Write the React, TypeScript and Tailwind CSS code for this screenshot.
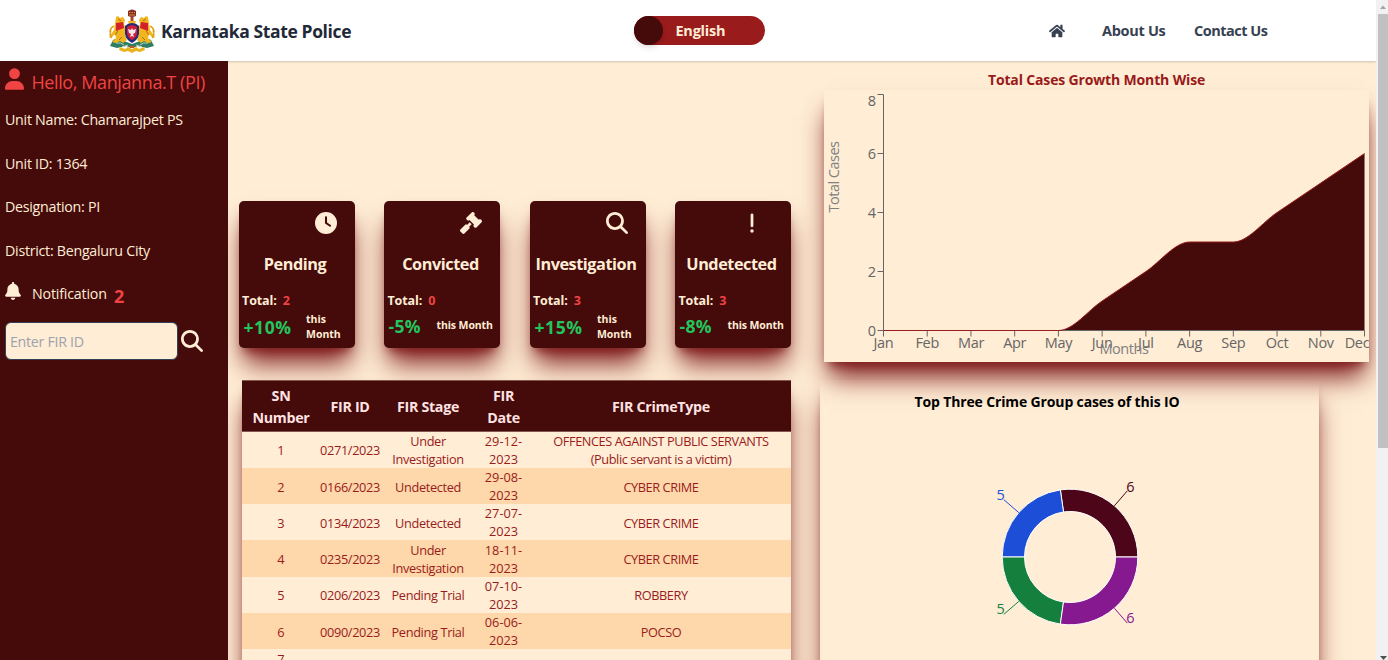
import React from "react";
import { FaHome } from "react-icons/fa";
import { FaUser, FaBell, FaMagnifyingGlass, FaClock, FaGavel, FaExclamation } from "react-icons/fa6";

const GLOW = "shadow-[0_20px_25px_-5px_#7f1d1d,0_8px_10px_-6px_#7f1d1d]";

function Emblem() {
  return (
    <svg viewBox="0 0 48 44" className="h-[44px] w-[48px]">
      <path d="M5 31q5-3 11 1l8 3 8-3q6-4 11-1l3 6-7 2-9-2-6 2-6-2-9 2-7-2z" fill="#2f7d63" />
      <path d="M8 34q5-1 8 2M40 34q-5-1-8 2M14 38l6-2M34 38l-6-2" stroke="#b9d6c2" strokeWidth="1" fill="none" />
      <g id="lion">
        <path d="M8 8l2-1 2 2 3-1 2 3-1 4 2 5-1 6 2 5-4 3-3-2-4 2-4-1 4-4-1-4-4 4-2-1 5-7 1-6z" fill="#f2b51d" />
        <path d="M3 21q-2 5 1 8M6 17q-4 2-4 6" stroke="#e0a11b" strokeWidth="1.5" fill="none" />
        <path d="M8 14l7-1 1 6-8 3z" fill="#d3202b" />
        <path d="M7 26l3-4M11 31l3-3M10 10l3 2" stroke="#8d5b12" strokeWidth=".8" />
      </g>
      <use href="#lion" transform="translate(48 0) scale(-1 1)" />
      <path d="M20 2q4-3 8 0v5q-4 2-8 0z" fill="#8b2c22" />
      <path d="M21 3.500h1.500M23.500 3.500H25M26 3.500h1M21 6h6" stroke="#d3903f" strokeWidth="1" />
      <path d="M22.500 8h3v5h-3z" fill="#a4492a" />
      <path d="M20 12h8l-1 3h-6z" fill="#f2b51d" />
      <path d="M17 17q3-3 7-3t7 3v8q-1 6-7 9-6-3-7-9z" fill="#202a78" />
      <path d="M19 18q5-4 10 0v7q-1 4-5 6-4-2-5-6z" fill="#cc1f3a" />
      <path d="M20 20l3 1 1-2 1 2 3-1-1 4-2 1 1 3-2-1-2 1 1-3-2-1z" fill="#f4e9ef" />
      <path d="M12 38l5 2 3-2 4 2 4-2 3 2 5-2 1 3-5 2-4-1-4 2-4-2-4 1-5-2z" fill="#eab320" />
      <path d="M21 37h6l-1 2h-4z" fill="#b9552b" />
    </svg>
  );
}

function Header() {
  return (
    <header className="relative z-10 flex h-[61px] shrink-0 items-center bg-white shadow-[0_1px_2px_rgba(0,0,0,0.18)]">
      <div className="flex w-[526px] items-center pl-[108px]">
        <Emblem />
        <span className="ml-[5px] mt-[2px] whitespace-nowrap text-[17.5px] font-bold tracking-[-0.38px] text-[#1f2937]">Karnataka State Police</span>
      </div>
      <div className="ml-[108px] flex h-[29px] w-[131px] items-center rounded-full bg-[#991b1b]">
        <div className="h-[29px] w-[29px] rounded-full bg-[#450a0a] shadow-md" />
        <span className="ml-[12.5px] mt-px text-[14.5px] font-bold tracking-[-0.25px] text-[#ffedd5]">English</span>
      </div>
      <nav className="ml-[284px] flex items-center text-[15px] font-bold text-[#374151]">
        <FaHome className="h-[16px] w-[16px]" />
        <a className="ml-[37px] w-[92px] whitespace-nowrap pt-px text-[14.5px] tracking-[-0.3px]">About Us</a>
        <a className="whitespace-nowrap pt-px text-[14.5px] tracking-[-0.5px]">Contact Us</a>
      </nav>
    </header>
  );
}

function Sidebar() {
  const facts = ["Unit Name: Chamarajpet PS", "Unit ID: 1364", "Designation: PI", "District: Bengaluru City"];
  return (
    <aside className="relative z-20 flex w-[228px] shrink-0 flex-col bg-[#450a0a] px-[5px] text-[#ffedd5]">
      <div className="flex h-[37px] items-center pt-[5px] text-[#ef4444]">
        <FaUser className="-mt-[6px] h-[22px] w-[19px]" />
        <span className="ml-[7.5px] whitespace-nowrap text-[18px] tracking-[-0.4px]">Hello, Manjanna.T (PI)</span>
      </div>
      {facts.map((f) => (
        <p key={f} className="h-[43.6px] whitespace-nowrap text-[14.25px] leading-[43.6px] tracking-[-0.28px]">{f}</p>
      ))}
      <div className="flex h-[43px] items-center text-[14.25px]">
        <FaBell className="-mt-[5px] h-[18px] w-[16px]" />
        <span className="ml-[11px] w-[82px] tracking-[-0.2px]">Notification</span>
        <span className="mt-[6px] text-[18px] font-bold text-[#ef4444]">2</span>
      </div>
      <div className="mt-[7px] flex items-center">
        <input
          placeholder="Enter FIR ID"
          className="h-[38px] w-[173px] rounded-md border border-slate-700 bg-[#ffedd5] px-[4px] text-[14.25px] tracking-[-0.3px] placeholder:text-[#9ca3af]"
        />
        <FaMagnifyingGlass className="ml-[3px] h-[22px] w-[22px]" />
      </div>
    </aside>
  );
}

interface Stat { title: string; total: number; change: string; Icon: React.ComponentType<{ className?: string }>; stacked: boolean; iconClass: string }

const stats: Stat[] = [
  { title: "Pending", total: 2, change: "+10%", Icon: FaClock, stacked: true, iconClass: "mr-[18px]" },
  { title: "Convicted", total: 0, change: "-5%", Icon: FaGavel, stacked: false, iconClass: "mr-[18px]" },
  { title: "Investigation", total: 3, change: "+15%", Icon: FaMagnifyingGlass, stacked: true, iconClass: "mr-[18px]" },
  { title: "Undetected", total: 3, change: "-8%", Icon: FaExclamation, stacked: false, iconClass: "mr-[28px]" },
];

function StatCard({ title, total, change, Icon, stacked, iconClass }: Stat) {
  return (
    <div className={`flex h-[147px] w-[116px] flex-col rounded-[5px] bg-[#450a0a] text-[#ffedd5] ${GLOW}`}>
      <Icon className={`mt-[11px] h-[22px] w-[22px] self-end ${iconClass}`} />
      <h3 className="-ml-[4px] mt-[17px] h-[26px] whitespace-nowrap text-center text-[16.25px] font-bold leading-[26px] tracking-[-0.45px]">{title}</h3>
      <p className="ml-[3px] mt-[14px] h-[20px] text-[12.5px] font-bold leading-[20px] tracking-[-0.1px]">
        Total:<span className="ml-[6px] text-[#ef4444]">{total}</span>
      </p>
      {stacked ? (
        <div className="ml-[4.5px] mt-px flex items-center">
          <span className="w-[62.5px] text-[17.5px] font-bold leading-[28px] tracking-[0.6px] text-[#22c55e]">{change}</span>
          <span className="w-[40px] text-[10.5px] font-bold leading-[14.5px]">this Month</span>
        </div>
      ) : (
        <div className="ml-[4px] mt-[1px] flex items-center">
          <span className="w-[48px] text-[17.5px] font-bold leading-[28px] tracking-[0.3px] text-[#22c55e]">{change}</span>
          <span className="-mt-[2px] whitespace-nowrap text-[10.5px] font-bold leading-[14.5px] tracking-[-0.1px]">this Month</span>
        </div>
      )}
    </div>
  );
}

const rows: string[][] = [
  ["1", "0271/2023", "Under Investigation", "29-12-2023", "OFFENCES AGAINST PUBLIC SERVANTS (Public servant is a victim)"],
  ["2", "0166/2023", "Undetected", "29-08-2023", "CYBER CRIME"],
  ["3", "0134/2023", "Undetected", "27-07-2023", "CYBER CRIME"],
  ["4", "0235/2023", "Under Investigation", "18-11-2023", "CYBER CRIME"],
  ["5", "0206/2023", "Pending Trial", "07-10-2023", "ROBBERY"],
  ["6", "0090/2023", "Pending Trial", "06-06-2023", "POCSO"],
];

const COLS = "grid grid-cols-[78px_60px_96px_55px_260px] items-center text-center";

function CaseTable() {
  return (
    <div className={`ml-[3px] mt-[32px] h-[420px] w-[549px] shrink-0 bg-[#ffedd5] ${GLOW}`}>
      <div className={`${COLS} h-[51.5px] border-y border-[#84564f] bg-[#450a0a] pt-[2px] text-[14.25px] font-bold leading-[22px] tracking-[-0.3px] text-red-100`}>
        <span className="px-2">SN Number</span>
        <span>FIR ID</span>
        <span>FIR Stage</span>
        <span className="px-2">FIR Date</span>
        <span>FIR CrimeType</span>
      </div>
      {rows.map((r, i) => (
        <div key={r[0]} className={`${COLS} h-[36.3px] pt-[0.2px] text-[12.75px] leading-[18px] text-[#991b1b] ${i % 2 ? "bg-[#fed7aa]" : ""}`}>
          <span className="pt-px">{r[0]}</span>
          <span className="whitespace-nowrap pt-px tracking-[-0.35px]">{r[1]}</span>
          <span className={`px-[8px] tracking-[-0.35px] ${r[2].startsWith("Under ") ? "" : "pt-px"}`}>{r[2]}</span>
          <span className="px-[4px]">{r[3]}</span>
          <span className={`px-[16px] tracking-[-0.43px] ${i === 0 ? "" : "pt-px"}`}>{r[4]}</span>
        </div>
      ))}
      <div className={`${COLS} pt-px text-[12.75px] leading-[18px] text-[#991b1b]`}>
        <span>7</span>
      </div>
    </div>
  );
}

const months = ["Jan", "Feb", "Mar", "Apr", "May", "Jun", "Jul", "Aug", "Sep", "Oct", "Nov", "Dec"];
const values = [0, 0, 0, 0, 0, 1, 2, 3, 3, 4, 5, 6];
const slopes = [0, 0, 0, 0, 0, 1, 1, 0, 0, 1, 1, 1];
const X0 = 59.5, STEP = 43.73, Y0 = 240.5, UNIT = 29.5;
const px = (i: number) => X0 + i * STEP;
const py = (v: number) => Y0 - v * UNIT;
const curve = values
  .map((v, i) => {
    if (i === 0) return `M${px(0)},${py(v)}`;
    const a = values[i - 1] + slopes[i - 1] / 3;
    const b = v - slopes[i] / 3;
    return `C${px(i - 1) + STEP / 3},${py(a)} ${px(i) - STEP / 3},${py(b)} ${px(i)},${py(v)}`;
  })
  .join("");

function GrowthChart() {
  return (
    <svg width="545" height="272" className={`mt-[2px] block shrink-0 overflow-hidden bg-[#ffedd5] ${GLOW}`} fontSize="14.5">
      <path d={`${curve}V${Y0}H${X0}Z`} fill="#450a0a" />
      <path d={`M${X0},4.5V${Y0}H${px(11)}`} stroke="#666" fill="none" />
      {[0, 2, 4, 6, 8].map((v) => (
        <g key={v}>
          <path d={`M${X0 - 6},${py(v)}H${X0}`} stroke="#666" />
          <text x={X0 - 7.5} y={v === 8 ? 16 : py(v) + 5.5} textAnchor="end" fill="#666">{v}</text>
        </g>
      ))}
      {months.map((m, i) => (
        <g key={m}>
          <path d={`M${px(i)},${Y0}v6`} stroke="#666" />
          <text x={i === 11 ? 533 : px(i)} y="258" textAnchor="middle" fill="#666" letterSpacing="-0.3">{m}</text>
        </g>
      ))}
      <path d={curve} stroke="#991b1b" fill="none" />
      <text x="300" y="263.5" textAnchor="middle" fill="#808080" letterSpacing="-0.4">Months</text>
      <text transform="translate(15 87) rotate(-90)" textAnchor="middle" fill="#808080" letterSpacing="-0.5">Total Cases</text>
    </svg>
  );
}

const slices = [
  { n: 6, from: 0, to: 98.18, color: "#4c0519" },
  { n: 5, from: 98.18, to: 180, color: "#1d4ed8" },
  { n: 5, from: 180, to: 261.82, color: "#15803d" },
  { n: 6, from: 261.82, to: 360, color: "#86198f" },
];

function polar(r: number, deg: number): [number, number] {
  const t = (deg * Math.PI) / 180;
  return [120 + r * Math.cos(t), 100 - r * Math.sin(t)];
}

function Donut() {
  return (
    <svg width="240" height="200" fontSize="14.5">
      {slices.map((s) => {
        const mid = (s.from + s.to) / 2;
        const end = polar(87.5, mid);
        return (
          <g key={s.from}>
            <path
              d={`M${polar(67.8, s.from)}A67.8,67.8 0 0 0 ${polar(67.8, s.to)}L${polar(45.5, s.to)}A45.5,45.5 0 0 1 ${polar(45.5, s.from)}Z`}
              fill={s.color}
              stroke="#fff"
            />
            <path d={`M${polar(67.8, mid)}L${end}`} stroke={s.color} />
            <text x={end[0] + (end[0] > 120 ? -1 : 1)} y={end[1] + (end[1] > 100 ? 0 : 0.8)} textAnchor={end[0] > 120 ? "start" : "end"} fill={s.color}>{s.n}</text>
          </g>
        );
      })}
    </svg>
  );
}

function Scrollbar() {
  return (
    <div className="flex w-[12px] shrink-0 flex-col items-center justify-between bg-[#f1f1f1]">
      <svg width="12" height="14"><path d="M4 9h6L7 5.5z" fill="#a3a3a3" /></svg>
      <div className="ml-[2px] h-[434px] w-[10px] bg-[#c1c1c1]" />
      <div className="grow" />
      <svg width="12" height="6"><path d="M4 2h7L7.500 6z" fill="#505050" /></svg>
    </div>
  );
}

export default function App() {
  return (
    <div className="flex h-[660px] w-[1388px] overflow-hidden font-['Open_Sans','Noto_Sans',sans-serif]">
      <div className="flex w-[1376px] flex-col overflow-hidden">
        <Header />
        <div className="flex h-[599px] bg-[#ffedd5]">
          <Sidebar />
          <section className="flex w-[592px] shrink-0 flex-col pl-[11px] pt-[140px]">
            <div className="flex w-[552.5px] shrink-0 gap-[29.49px]">
              {stats.map((s) => <StatCard key={s.title} {...s} />)}
            </div>
            <CaseTable />
          </section>
          <section className="flex w-[556px] flex-col">
            <div className="flex w-[549px] flex-col pl-[4px] pt-[7px]">
              <h2 className="h-[20px] text-center text-[14px] font-bold leading-[24px] tracking-[-0.15px] text-[#991b1b]">Total Cases Growth Month Wise</h2>
              <GrowthChart />
            </div>
            <div className={`mt-[18px] flex h-[400px] w-[499px] shrink-0 flex-col items-center ${GLOW}`}>
              <h2 className="mr-[45px] mt-[10px] h-[24px] text-[14px] font-bold leading-[24px] tracking-[-0.14px] text-black">Top Three Crime Group cases of this IO</h2>
              <div className="mt-[43px]">
                <Donut />
              </div>
            </div>
          </section>
        </div>
      </div>
      <Scrollbar />
    </div>
  );
}
